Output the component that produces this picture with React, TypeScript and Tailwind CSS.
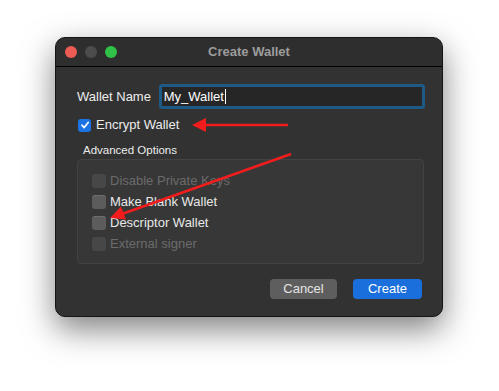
const font = { fontFamily: '"Liberation Sans", Arial, sans-serif' };

type OptionProps = { label: string; disabled?: boolean };

function Option({ label, disabled }: OptionProps) {
  return (
    <div className="flex h-[21px] items-center gap-[4px]">
      <span
        className={
          disabled
            ? "h-[14px] w-[14px] rounded-[3px] bg-[#474747]"
            : "h-[14px] w-[14px] rounded-[3px] bg-[#5c5c5c] shadow-[inset_0_1px_0_rgba(255,255,255,0.12)]"
        }
      />
      <span className={disabled ? "text-[13px] text-[#6b6b6b]" : "text-[13px] text-[#e8e8e8]"}>{label}</span>
    </div>
  );
}

export default function App() {
  return (
    <div className="relative h-[391px] w-[499px] bg-white pl-[55px] pt-[37px]" style={font}>
      <div className="flex h-[280px] w-[388px] flex-col overflow-hidden rounded-[10px] border border-[#151515] bg-[#323232] shadow-[0_12px_32px_rgba(0,0,0,0.5)]">
        {/* title bar */}
        <div className="relative flex h-[29px] shrink-0 items-center border-b border-black bg-[#2e2e2e] pl-[9px]">
          <div className="flex gap-[8px]">
            <span className="h-[12px] w-[12px] rounded-full bg-[#ed5b55]" />
            <span className="h-[12px] w-[12px] rounded-full bg-[#4c4c4c]" />
            <span className="h-[12px] w-[12px] rounded-full bg-[#2fc246]" />
          </div>
          <span className="absolute inset-x-0 text-center text-[13px] font-bold text-[#9c9c9c]">Create Wallet</span>
        </div>

        <div className="flex flex-1 flex-col pl-[21px] pr-[17px] pt-[17px]">
          {/* wallet name */}
          <div className="flex items-center">
            <span className="w-[82px] text-[13px] text-[#ececec]">Wallet Name</span>
            <div className="flex h-[25px] w-[267px] items-center rounded-[3px] border-[3px] border-[#1f5a86] bg-[#262626] pl-[2px]">
              <span className="text-[13px] text-white">My_Wallet</span>
              <span className="ml-px h-[15px] w-px bg-white" />
            </div>
          </div>

          {/* encrypt */}
          <div className="mt-[8px] flex h-[16px] items-center gap-[5px] pl-px">
            <span className="flex h-[13px] w-[13px] items-center justify-center rounded-[3px] bg-[#1b73e4]">
              <svg width="10" height="10" viewBox="0 0 10 10">
                <path d="M2 5.2 L4.2 7.6 L8.2 2.4" fill="none" stroke="white" strokeWidth="1.7" strokeLinecap="round" strokeLinejoin="round" />
              </svg>
            </span>
            <span className="text-[13px] text-[#ececec]">Encrypt Wallet</span>
          </div>

          {/* advanced */}
          <span className="ml-[6px] mt-[10px] text-[11.5px] leading-[14px] text-[#ececec]">Advanced Options</span>
          <div className="mt-[2px] h-[105px] w-[347px] rounded-[4px] border border-[#434343] bg-[#373737] pl-[14px] pt-[10px]">
            <Option label="Disable Private Keys" disabled />
            <Option label="Make Blank Wallet" />
            <Option label="Descriptor Wallet" />
            <Option label="External signer" disabled />
          </div>

          {/* buttons */}
          <div className="mt-[15px] flex justify-end gap-[16px] pr-[3px]">
            <button className="h-[20px] w-[67px] rounded-[4px] bg-[#5e5e5e] text-[13px] text-[#e4e4e4]">Cancel</button>
            <button className="h-[20px] w-[69px] rounded-[4px] bg-[#1b6fdc] text-[13px] text-white">Create</button>
          </div>
        </div>
      </div>

      {/* annotation arrows */}
      <svg className="pointer-events-none absolute left-0 top-0" width="499" height="391">
        <line x1="288" y1="125" x2="204" y2="125" stroke="#f11d1d" strokeWidth="2.5" />
        <polygon points="192,125 206,118 206,132" fill="#f11d1d" />
        <line x1="291" y1="154" x2="122" y2="214" stroke="#f11d1d" strokeWidth="2.5" />
        <polygon points="110,218 121,206.5 126,219.5" fill="#f11d1d" />
      </svg>
    </div>
  );
}
